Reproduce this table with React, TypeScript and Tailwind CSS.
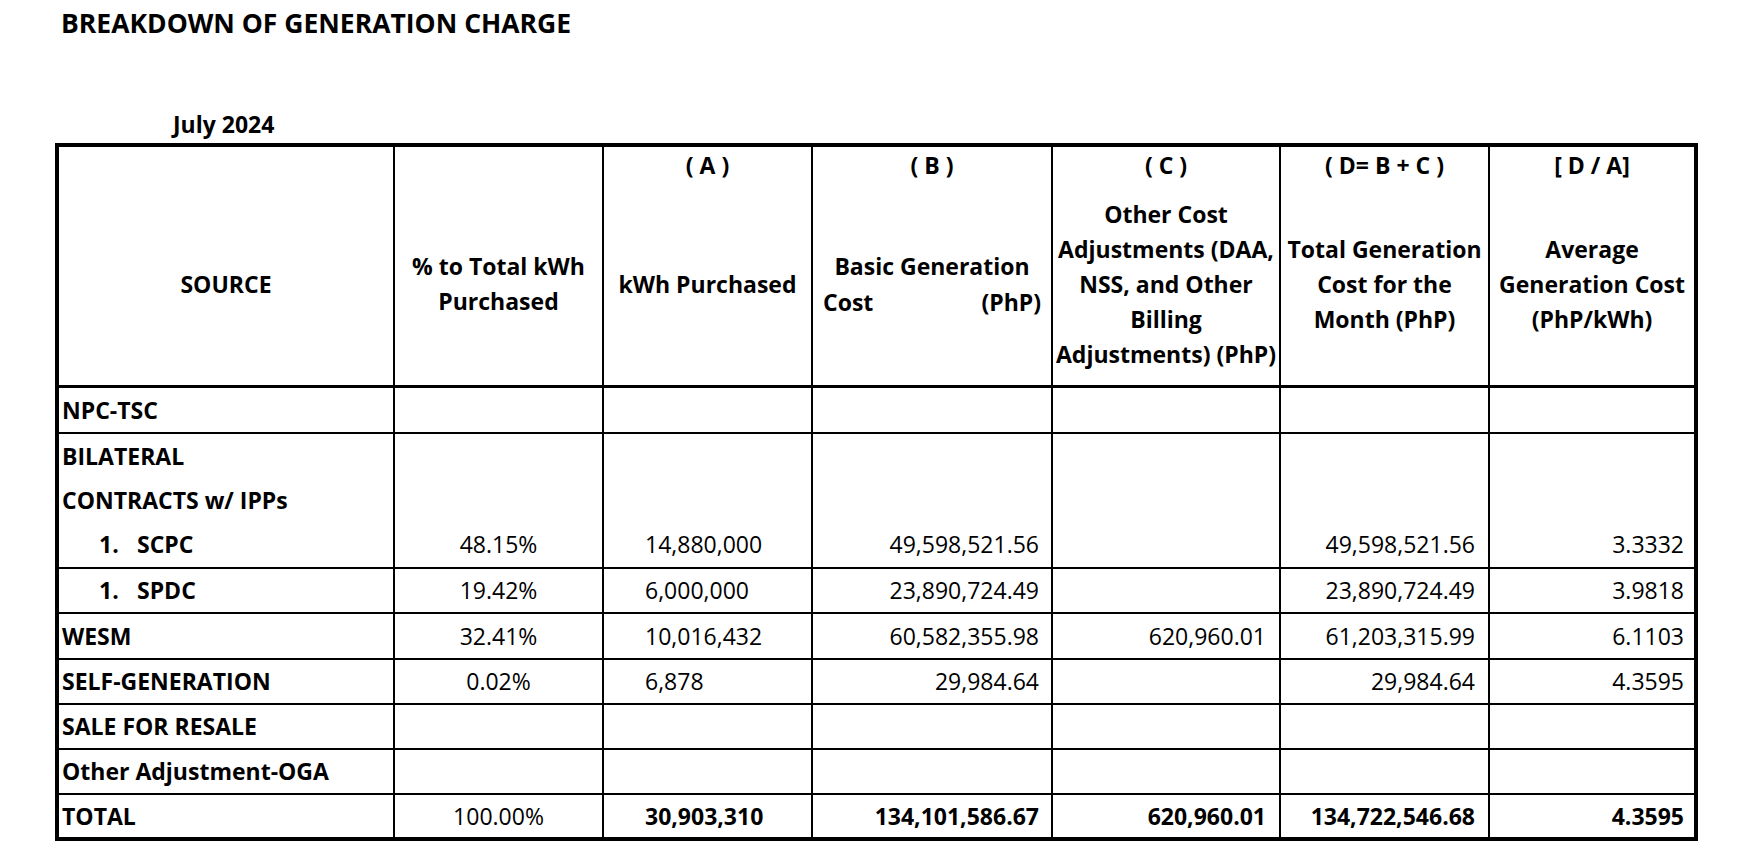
import type { ReactNode } from 'react';

type Row = {
  key: string;
  label: ReactNode;
  vals: string[];
  tall?: boolean;
  total?: boolean;
};

const ROWS: Row[] = [
  { key: 'npc', label: 'NPC-TSC', vals: ['', '', '', '', '', ''] },
  {
    key: 'scpc',
    tall: true,
    label: (
      <>
        <div className="h-[44px] flex items-center">BILATERAL</div>
        <div className="h-[44px] flex items-center">CONTRACTS w/ IPPs</div>
        <div className="h-[44px] flex items-center pl-[37px]">
          <span className="w-[38px]">1.</span>SCPC
        </div>
      </>
    ),
    vals: ['48.15%', '14,880,000', '49,598,521.56', '', '49,598,521.56', '3.3332'],
  },
  {
    key: 'spdc',
    label: (
      <div className="flex items-center pl-[37px]">
        <span className="w-[38px]">1.</span>SPDC
      </div>
    ),
    vals: ['19.42%', '6,000,000', '23,890,724.49', '', '23,890,724.49', '3.9818'],
  },
  { key: 'wesm', label: 'WESM', vals: ['32.41%', '10,016,432', '60,582,355.98', '620,960.01', '61,203,315.99', '6.1103'] },
  { key: 'self', label: 'SELF-GENERATION', vals: ['0.02%', '6,878', '29,984.64', '', '29,984.64', '4.3595'] },
  { key: 'sale', label: 'SALE FOR RESALE', vals: ['', '', '', '', '', ''] },
  { key: 'oga', label: 'Other Adjustment-OGA', vals: ['', '', '', '', '', ''] },
  { key: 'total', total: true, label: 'TOTAL', vals: ['100.00%', '30,903,310', '134,101,586.67', '620,960.01', '134,722,546.68', '4.3595'] },
];

// alignment per value column: %, kWh, then the money columns
const ALIGN = [
  'justify-center',
  'justify-start pl-[41px]',
  'justify-end pr-[12px]',
  'justify-end pr-[13px]',
  'justify-end pr-[13px]',
  'justify-end pr-[10px]',
];

function HeaderCell({ top, children, last }: { top?: string; children: ReactNode; last?: boolean }) {
  return (
    <div className={`flex flex-col font-bold border-b-[3px] border-black ${last ? '' : 'border-r-2'}`}>
      <div className="h-[36px] flex items-center justify-center">{top}</div>
      <div className="flex-1 flex flex-col items-center justify-center text-center leading-[35px]">{children}</div>
    </div>
  );
}

export default function App() {
  return (
    <div className="min-h-screen bg-white text-black font-['Open_Sans',sans-serif]">
      <div className="pl-[61px] pt-[10px] text-[26.5px] leading-[26px] font-bold">BREAKDOWN OF GENERATION CHARGE</div>
      <div className="pl-[173px] mt-[77px] text-[23px] leading-[22px] font-bold">July 2024</div>

      <div className="ml-[55px] mt-[8px] w-[1643px] border-4 border-black grid grid-cols-[336px_209px_209px_240px_228px_209px_204px] grid-rows-[241px_46px_135px_45px_46px_45px_45px_45px_42px] text-[23px]">
        {/* header */}
        <HeaderCell>SOURCE</HeaderCell>
        <HeaderCell>
          % to Total kWh<br />Purchased
        </HeaderCell>
        <HeaderCell top="( A )">kWh Purchased</HeaderCell>
        <HeaderCell top="( B )">
          <div className="w-full leading-[36px]">
            <div className="text-center">Basic Generation</div>
            <div className="flex justify-between px-[10px]">
              <span>Cost</span>
              <span>(PhP)</span>
            </div>
          </div>
        </HeaderCell>
        <HeaderCell top="( C )">
          Other Cost<br />Adjustments (DAA,<br />NSS, and Other<br />Billing<br />Adjustments) (PhP)
        </HeaderCell>
        <HeaderCell top="( D= B + C )">
          Total Generation<br />Cost for the<br />Month (PhP)
        </HeaderCell>
        <HeaderCell top="[ D / A]" last>
          Average<br />Generation Cost<br />(PhP/kWh)
        </HeaderCell>

        {/* body */}
        {ROWS.map(row => (
          <div key={row.key} className="contents">
            <div
              className={`border-r-2 border-black font-bold pl-[3px] flex ${row.tall ? 'flex-col' : 'items-center'} ${row.total ? '' : 'border-b-2'}`}
            >
              {row.label}
            </div>
            {row.vals.map((v, i) => (
              <div
                key={i}
                className={`border-black flex ${row.tall ? 'items-end pb-[1px]' : 'items-center'} ${i < 5 ? 'border-r-2' : ''} ${row.total ? '' : 'border-b-2'} ${row.total && i > 0 ? 'font-bold' : ''} ${ALIGN[i]}`}
              >
                <span className={row.tall ? 'h-[44px] flex items-center' : ''}>{v}</span>
              </div>
            ))}
          </div>
        ))}
      </div>
    </div>
  );
}
